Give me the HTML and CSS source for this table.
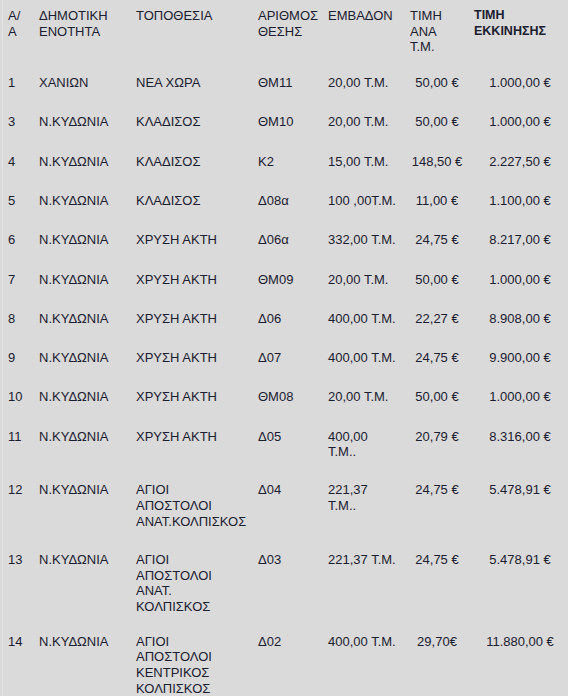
FILE: index.html
```html
<!DOCTYPE html>
<html lang="el">
<head>
<meta charset="utf-8">
<title>Πίνακας θέσεων</title>
<link rel="stylesheet" href="styles.css">
</head>
<body>
<div class="frame">
<table class="plots">
  <colgroup>
    <col class="c-aa"><col class="c-unit"><col class="c-loc"><col class="c-num"><col class="c-area"><col class="c-price"><col class="c-start">
  </colgroup>
  <thead>
    <tr>
      <td>Α/<br>Α</td>
      <td>ΔΗΜΟΤΙΚΗ<br>ΕΝΟΤΗΤΑ</td>
      <td>ΤΟΠΟΘΕΣΙΑ</td>
      <td>ΑΡΙΘΜΟΣ<br>ΘΕΣΗΣ</td>
      <td>ΕΜΒΑΔΟΝ</td>
      <td class="h-price">ΤΙΜΗ<br>ΑΝΑ<br>Τ.Μ.</td>
      <td class="h-start">ΤΙΜΗ<br>ΕΚΚΙΝΗΣΗΣ</td>
    </tr>
  </thead>
  <tbody>
    <tr><td>1</td><td>ΧΑΝΙΩΝ</td><td>ΝΕΑ ΧΩΡΑ</td><td>ΘΜ11</td><td>20,00 Τ.Μ.</td><td class="price">50,00 €</td><td class="start">1.000,00 €</td></tr>
    <tr><td>3</td><td>Ν.ΚΥΔΩΝΙΑ</td><td>ΚΛΑΔΙΣΟΣ</td><td>ΘΜ10</td><td>20,00 Τ.Μ.</td><td class="price">50,00 €</td><td class="start">1.000,00 €</td></tr>
    <tr><td>4</td><td>Ν.ΚΥΔΩΝΙΑ</td><td>ΚΛΑΔΙΣΟΣ</td><td>Κ2</td><td>15,00 Τ.Μ.</td><td class="price">148,50 €</td><td class="start">2.227,50 €</td></tr>
    <tr><td>5</td><td>Ν.ΚΥΔΩΝΙΑ</td><td>ΚΛΑΔΙΣΟΣ</td><td>Δ08α</td><td>100 ,00Τ.Μ.</td><td class="price">11,00 €</td><td class="start">1.100,00 €</td></tr>
    <tr><td>6</td><td>Ν.ΚΥΔΩΝΙΑ</td><td>ΧΡΥΣΗ ΑΚΤΗ</td><td>Δ06α</td><td>332,00 Τ.Μ.</td><td class="price">24,75 €</td><td class="start">8.217,00 €</td></tr>
    <tr><td>7</td><td>Ν.ΚΥΔΩΝΙΑ</td><td>ΧΡΥΣΗ ΑΚΤΗ</td><td>ΘΜ09</td><td>20,00 Τ.Μ.</td><td class="price">50,00 €</td><td class="start">1.000,00 €</td></tr>
    <tr><td>8</td><td>Ν.ΚΥΔΩΝΙΑ</td><td>ΧΡΥΣΗ ΑΚΤΗ</td><td>Δ06</td><td>400,00 Τ.Μ.</td><td class="price">22,27 €</td><td class="start">8.908,00 €</td></tr>
    <tr><td>9</td><td>Ν.ΚΥΔΩΝΙΑ</td><td>ΧΡΥΣΗ ΑΚΤΗ</td><td>Δ07</td><td>400,00 Τ.Μ.</td><td class="price">24,75 €</td><td class="start">9.900,00 €</td></tr>
    <tr><td>10</td><td>Ν.ΚΥΔΩΝΙΑ</td><td>ΧΡΥΣΗ ΑΚΤΗ</td><td>ΘΜ08</td><td>20,00 Τ.Μ.</td><td class="price">50,00 €</td><td class="start">1.000,00 €</td></tr>
    <tr class="gap-22"><td>11</td><td>Ν.ΚΥΔΩΝΙΑ</td><td>ΧΡΥΣΗ ΑΚΤΗ</td><td>Δ05</td><td>400,00<br>Τ.Μ..</td><td class="price">20,79 €</td><td class="start">8.316,00 €</td></tr>
    <tr class="gap-23"><td>12</td><td>Ν.ΚΥΔΩΝΙΑ</td><td>ΑΓΙΟΙ<br>ΑΠΟΣΤΟΛΟΙ<br>ΑΝΑΤ.ΚΟΛΠΙΣΚΟΣ</td><td>Δ04</td><td>221,37<br>Τ.Μ..</td><td class="price">24,75 €</td><td class="start">5.478,91 €</td></tr>
    <tr class="gap-20"><td>13</td><td>Ν.ΚΥΔΩΝΙΑ</td><td>ΑΓΙΟΙ<br>ΑΠΟΣΤΟΛΟΙ<br>ΑΝΑΤ.<br>ΚΟΛΠΙΣΚΟΣ</td><td>Δ03</td><td>221,37 Τ.Μ.</td><td class="price">24,75 €</td><td class="start">5.478,91 €</td></tr>
    <tr><td>14</td><td>Ν.ΚΥΔΩΝΙΑ</td><td>ΑΓΙΟΙ<br>ΑΠΟΣΤΟΛΟΙ<br>ΚΕΝΤΡΙΚΟΣ<br>ΚΟΛΠΙΣΚΟΣ</td><td>Δ02</td><td>400,00 Τ.Μ.</td><td class="price">29,70€</td><td class="start">11.880,00 €</td></tr>
  </tbody>
</table>
</div>
</body>
</html>
```
FILE: styles.css
```css
html, body {
  margin: 0;
  padding: 0;
  background: #dadada;
}

body {
  font-family: "Liberation Sans", Arial, sans-serif;
  font-size: 13px;
  line-height: 15.7px;
  color: #1b2030;
}

.frame {
  margin-left: 2px;
  border-left: 1px solid #e3e3e3;
  padding: 8px 0 0 5px;
  min-height: 688px;
}

.plots {
  table-layout: fixed;
  border-collapse: collapse;
  width: 558px;
}

.c-aa { width: 31px; }
.c-unit { width: 97px; }
.c-loc { width: 122px; }
.c-num { width: 70px; }
.c-area { width: 82px; }
.c-price { width: 64px; }
.c-start { width: 92px; }

.plots td {
  padding: 0 0 23.6px 0;
  vertical-align: top;
  text-align: left;
  white-space: nowrap;
}

.plots thead td {
  padding-bottom: 20px;
}

.plots .gap-22 td { padding-bottom: 22px; }
.plots .gap-23 td { padding-bottom: 22.5px; }
.plots .gap-20 td { padding-bottom: 19px; }

.plots .h-start {
  font-weight: bold;
  font-size: 12.5px;
}

.plots td.price {
  text-align: center;
  padding-right: 10px;
}

.plots td.start {
  text-align: center;
}
```
